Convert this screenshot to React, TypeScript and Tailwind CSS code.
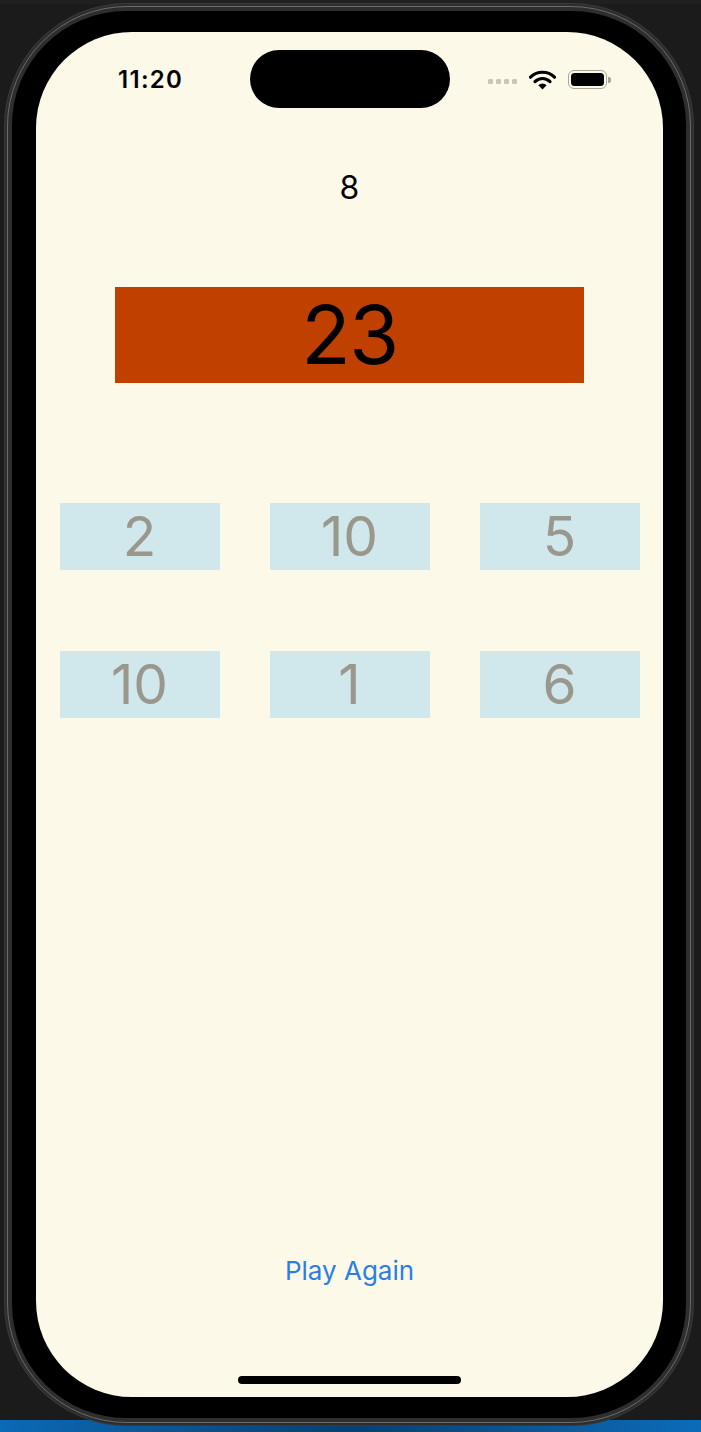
import React from "react";

const tiles = [2, 10, 5, 10, 1, 6];

function StatusIcons() {
  return (
    <div className="flex items-center">
      <div className="flex items-center gap-[3px] mr-[12px] mt-[3px]">
        {[0, 1, 2, 3].map((i) => (
          <span key={i} className="block w-[5px] h-[5px] rounded-[1.5px] bg-[#c9c6b6]" />
        ))}
      </div>
      <svg width="27" height="20" viewBox="0 0 27 20" className="mr-[12px]">
        <path d="M1.5 7.2 A17 17 0 0 1 25.5 7.2" fill="none" stroke="#000" strokeWidth="3.2" strokeLinecap="round" />
        <path d="M6 11.6 A10.6 10.6 0 0 1 21 11.6" fill="none" stroke="#000" strokeWidth="3.2" strokeLinecap="round" />
        <path d="M9.4 15.2 L13.5 19.4 L17.6 15.2 A5.8 5.8 0 0 0 9.4 15.2 Z" fill="#000" />
      </svg>
      <div className="flex items-center">
        <div className="w-[39px] h-[19px] rounded-[6px] border-[1.5px] border-[#a9a697] p-[2px]">
          <div className="w-full h-full rounded-[3.5px] bg-black" />
        </div>
        <div className="w-[2.5px] h-[6px] rounded-r-[2px] bg-[#a9a697] ml-[1px]" />
      </div>
    </div>
  );
}

export default function App() {
  return (
    <div
      className="w-[701px] h-[1432px] bg-[#1b1b1b] flex flex-col overflow-hidden"
      style={{ fontFamily: "Inter, 'Open Sans', sans-serif" }}
    >
      <div className="shrink-0 h-[4px] bg-[#202020]" />
      {/* phone */}
      <div className="shrink-0 relative z-10 ml-[5px] w-[688px] h-[1421px] rounded-[122px] bg-[#2d2d2d] p-[2px] shadow-[0_0_0_1px_#3a3a3a]">
        <div className="w-full h-full rounded-[120px] border-[1.5px] border-[#6b6b6b] bg-[#2e2e2e] p-[4px]">
          <div className="w-full h-full rounded-[114px] bg-black pt-[21px] pb-[21px] pl-[24px] pr-[23px]">
            {/* screen */}
            <div className="w-full h-full rounded-[96px] bg-[#fdf9e9] flex flex-col overflow-hidden">
              {/* status bar */}
              <div className="shrink-0 grid grid-cols-[214px_200px_1fr] items-center pt-[18px]">
                <div className="pl-[82px] pt-[2px] text-[24px] font-semibold leading-none text-black tracking-[1.3px]">
                  11:20
                </div>
                <div className="h-[58px] rounded-full bg-black" />
                <div className="flex justify-start pl-[38px] pt-[1px]">
                  <StatusIcons />
                </div>
              </div>

              {/* score */}
              <div className="shrink-0 mt-[64px] h-[32px] text-[32px] leading-none text-center text-black">8</div>

              {/* target */}
              <div className="shrink-0 mt-[83px] mx-auto w-[469px] h-[96px] bg-[#c04000] flex items-center justify-center">
                <span className="text-[81px] leading-none text-black tracking-[-1.5px]">23</span>
              </div>

              {/* tiles */}
              <div className="shrink-0 mt-[120px] mx-auto grid grid-cols-[160px_160px_160px] gap-x-[50px] gap-y-[81px]">
                {tiles.map((n, i) => (
                  <div
                    key={i}
                    className="h-[67px] bg-[#d0e8ec] flex items-center justify-center text-[55px] leading-none text-[#9a978d]"
                  >
                    {n}
                  </div>
                ))}
              </div>

              <div className="flex-1" />

              <div className="shrink-0 text-center text-[26px] leading-none text-[#2a7fe2]">Play Again</div>

              <div className="shrink-0 mt-[92px] mb-[13px] mx-auto w-[223px] h-[8px] rounded-full bg-black" />
            </div>
          </div>
        </div>
      </div>
      <div className="shrink-0 -mt-[5px] h-[12px] bg-gradient-to-r from-[#0b69b6] via-[#0a3f70] to-[#0b6cb9]" />
    </div>
  );
}
